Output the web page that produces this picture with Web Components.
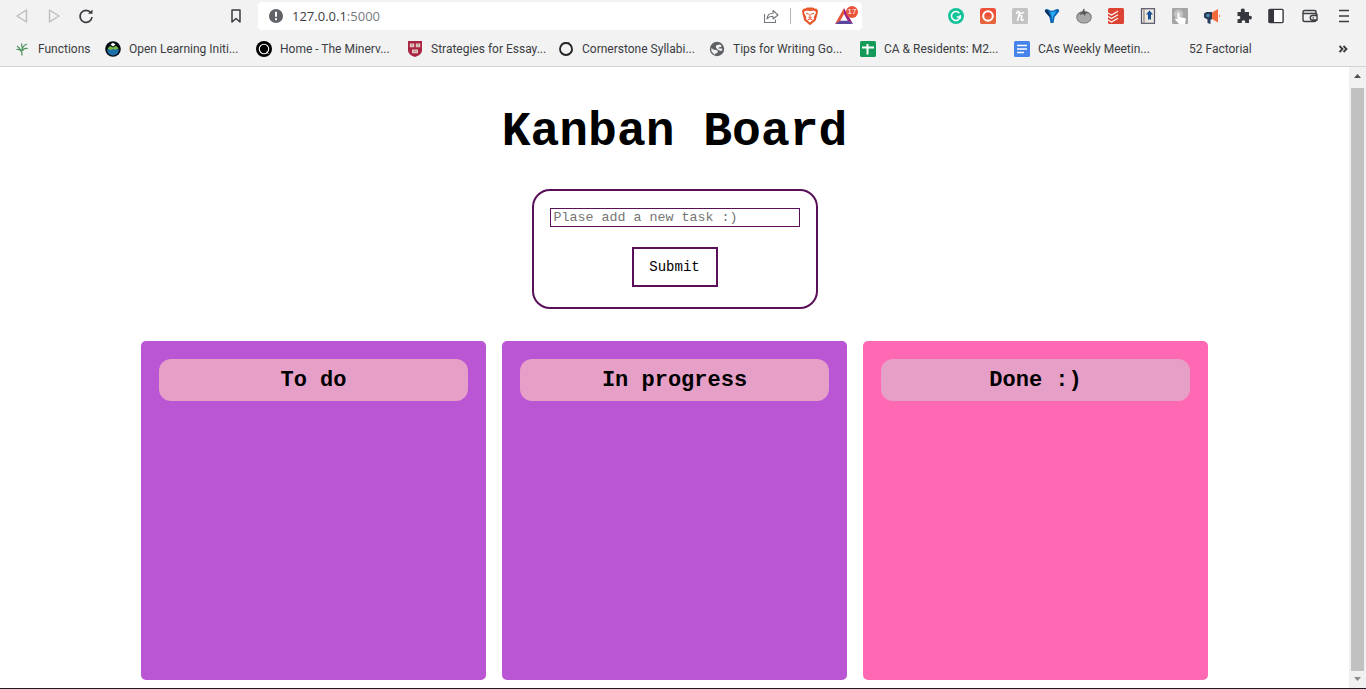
<!DOCTYPE html>
<html lang="en">
<head>
<meta charset="utf-8">
<title>Kanban Board</title>
<style>
html, body { margin: 0; }
body { font-family: "Open Sans", "Noto Sans", sans-serif; background: #fff; }
</style>
</head>
<body>
<app-window></app-window>

<template id="t-window">
<style>
:host { display: flex; flex-direction: column; min-height: 100vh; box-sizing: border-box; border-bottom: 1px solid #1d1824; }
.view { flex: 1; display: flex; }
kanban-page { flex: 1; min-width: 0; }
</style>
<browser-toolbar></browser-toolbar>
<bookmarks-bar></bookmarks-bar>
<div class="view">
  <kanban-page></kanban-page>
  <scroll-rail></scroll-rail>
</div>
</template>

<template id="t-toolbar">
<style>
:host { display: flex; align-items: center; height: 32px; padding: 0 6px; background: #f2f2f2; }
.nav { display: flex; width: 252px; box-sizing: border-box; padding-right: 6px; }
.mark { margin-left: auto; }
.bar { flex: 1; display: flex; align-items: center; height: 28px; background: #fff; border-radius: 4px; box-sizing: border-box; padding-left: 10px; min-width: 0; }
.url { flex: 1; min-width: 0; margin-left: 8px; font-size: 13px; line-height: 18px; color: #3c4043; text-decoration: none; }
.url span { color: #777b80; }
.sep { width: 1px; height: 16px; background: #b4b4b4; margin: 0 3px; }
.ext { display: flex; margin-left: 78px; }
</style>
<div class="nav">
  <tool-button name="back" label="Back"></tool-button>
  <tool-button name="forward" label="Forward"></tool-button>
  <tool-button name="reload" label="Reload"></tool-button>
  <tool-button class="mark" name="bookmark" label="Bookmark"></tool-button>
</div>
<div class="bar">
  <ui-icon name="info"></ui-icon>
  <a class="url" href="#">127.0.0.1<span>:5000</span></a>
  <tool-button name="share" label="Share"></tool-button>
  <div class="sep"></div>
  <tool-button name="brave" label="Shields"></tool-button>
  <notice-button></notice-button>
</div>
<div class="ext">
  <tool-button name="grammar" label="Writing"></tool-button>
  <tool-button name="ring" label="Recorder"></tool-button>
  <tool-button name="honey" label="Coupons"></tool-button>
  <tool-button name="vee" label="Video"></tool-button>
  <tool-button name="tomato" label="Timer"></tool-button>
  <tool-button name="todo" label="Tasks"></tool-button>
  <tool-button name="book" label="Reader"></tool-button>
  <tool-button name="touch" label="Touch"></tool-button>
  <tool-button name="horn" label="Read aloud"></tool-button>
  <tool-button name="puzzle" label="Extensions"></tool-button>
  <tool-button name="panel" label="Sidebar"></tool-button>
  <tool-button class="wide" name="wallet" label="Wallet"></tool-button>
  <tool-button class="wide" name="menu" label="Menu"></tool-button>
</div>
</template>

<template id="t-bookmarks">
<style>
:host { display: flex; align-items: center; height: 34px; padding: 0 7px 0 14px; background: #f2f2f2; border-bottom: 1px solid #d2d2d2; }
bookmark-link { width: 151px; }
.short { width: 91px; }
.long { width: 154px; }
tool-button { margin-left: auto; }
</style>
<bookmark-link class="short" name="leaf">Functions</bookmark-link>
<bookmark-link name="hill">Open Learning Initi...</bookmark-link>
<bookmark-link name="blackring">Home - The Minerv...</bookmark-link>
<bookmark-link name="crest">Strategies for Essay...</bookmark-link>
<bookmark-link name="circle">Cornerstone Syllabi...</bookmark-link>
<bookmark-link name="globe">Tips for Writing Go...</bookmark-link>
<bookmark-link class="long" name="sheet">CA &amp; Residents: M2...</bookmark-link>
<bookmark-link name="doc">CAs Weekly Meetin...</bookmark-link>
<bookmark-link class="short" name="none">52 Factorial</bookmark-link>
<tool-button name="more" label="More bookmarks"></tool-button>
</template>

<template id="t-kanban">
<style>
:host { display: flex; flex-direction: column; align-items: center; padding: 37px 16px 8px; box-sizing: border-box; font-family: "Courier New", "Liberation Mono", monospace; color: #000; }
h1 { margin: 0; font-size: 48px; line-height: 56px; }
task-form { margin: 29px 0 32px; }
.lists { display: flex; gap: 16px; width: 100%; max-width: 1067px; flex: 1; }
kanban-list { flex: 1; }
</style>
<h1>Kanban Board</h1>
<task-form></task-form>
<div class="lists">
  <kanban-list>To do</kanban-list>
  <kanban-list>In progress</kanban-list>
  <kanban-list style="--list: #ff69b4">Done :)</kanban-list>
</div>
</template>

<template id="t-form">
<style>
:host { display: block; }
form { display: flex; flex-direction: column; align-items: center; gap: 20px; padding: 17px 16px 20px; border: 2px solid #5a1059; border-radius: 18px; }
input, button { font-family: inherit; background: #fff; color: #000; box-sizing: border-box; margin: 0; border-radius: 0; }
input { width: 250px; height: 19px; padding: 0 3px; border: 1px solid #5a1059; outline: 0; }
input::placeholder { color: #757575; }
button { width: 86px; height: 40px; padding: 0; border: 2px solid #5a1059; font-size: 14px; }
</style>
<form>
  <input type="text" aria-label="New task" placeholder="Plase add a new task :)">
  <button type="button">Submit</button>
</form>
</template>

<template id="t-list">
<style>
:host { display: block; box-sizing: border-box; min-height: 339px; padding: 18px; border-radius: 5px; background: var(--list, #ba55d3); }
h2 { margin: 0; padding-top: 2px; font-size: 22px; line-height: 40px; text-align: center; border-radius: 12px; background: #e6a0c7; }
</style>
<h2><slot></slot></h2>
</template>

<template id="t-rail">
<style>
:host { display: flex; flex-direction: column; align-items: center; width: 17px; background: #f1f1f1; }
.thumb { flex: 1; width: 13px; background: #c1c1c1; }
svg { display: block; }
</style>
<svg width="17" height="21" aria-hidden="true"><path d="M5 11h7L8.500 7z" fill="#505050"/></svg>
<div class="thumb"></div>
<svg width="17" height="17" aria-hidden="true"><path d="M5 6h7L8.500 10z" fill="#8b8b8b"/></svg>
</template>

<script>
const icons = {
  back: '<path d="M12.500 2v12L3 8z" fill="none" stroke="#bdbdbd" stroke-width="1.400" stroke-linejoin="round"/>',
  forward: '<path d="M3.500 2v12L13 8z" fill="none" stroke="#bdbdbd" stroke-width="1.400" stroke-linejoin="round"/>',
  reload: '<path d="M12.800 4.800A6 6 0 1 0 14 9" fill="none" stroke="#3b3d42" stroke-width="1.700"/><path d="M10 5.800h4.500V1.400z" fill="#3b3d42"/>',
  bookmark: '<path d="M4 2h8v12l-4-3.500L4 14z" fill="none" stroke="#3b3d42" stroke-width="1.500" stroke-linejoin="round"/>',
  info: '<circle cx="8" cy="8" r="7" fill="#5f6368"/><path d="M7 3.800h2v5H7zM7 10.300h2v2H7z" fill="#fff"/>',
  share: '<path d="M1.500 6v8.500h11v-3M4 11c.3-4 2.500-5.700 6-5.700V2.500L15 7l-5 4V8.300C7.300 8.300 5.400 9 4 11z" fill="none" stroke="#74777b" stroke-width="1.100" stroke-linejoin="round"/>',
  brave: '<path d="M3.500.500L5-.500h6l1.500 1 2 .2 1.500 2-.5 3.300-1.800 6.500L8 17.200l-5.700-4.700L.500 6 0 2.700l1.500-2z" fill="#e8562a"/><path d="M2.500 3.200L5.500 2.600l2.500.6 2.500-.6 3 .6.500 1.500-1.500 3-.8 1.500.4 1.800L8 14.500 3.900 11l.4-1.800-.8-1.500-1.500-3z" fill="#fff"/><path d="M4 5.200l3 1M12 5.200L9 6.200M8 6v3.500M6.300 9.200L8 10.200l1.700-1M5.800 11.800L8 10.800l2.200 1" fill="none" stroke="#e8562a" stroke-width="1"/>',
  grammar: '<circle cx="8" cy="8" r="8" fill="#15c39a"/><path d="M11.300 5.200A4.400 4.400 0 1 0 12.200 9H8.800M12.300 7v3.800" fill="none" stroke="#fff" stroke-width="1.500"/>',
  ring: '<rect width="16" height="16" rx="2.500" fill="#ef5039"/><path d="M0 8h16v5.500a2.500 2.500 0 0 1-2.500 2.500h-11A2.500 2.500 0 0 1 0 13.500z" fill="#e8633c"/><circle cx="8" cy="8" r="4.800" fill="none" stroke="#fff" stroke-width="2"/>',
  honey: '<rect width="16" height="16" rx="1.500" fill="#c3c3c3"/><path d="M4.500 5.500c.5-2 2.800-3 2.800-1S6.500 9 5.500 12.500M6.500 9C8 6.800 10.200 7 9.700 9l-.5 2.300c-.1 1.200 1 1.300 2 .5M7.500 5c1.600.6 3 .3 4-.5" fill="none" stroke="#fff" stroke-width="1.500" stroke-linecap="round"/>',
  vee: '<path d="M.800 2c.8-1.300 2.800-1.200 4.200-.2C6.500 3 9.500 3 11 1.800c1.400-1 3.400-1.100 4.200.2.3 2.500-3.700 5-4.700 7.500L9.500 15h-3l-1-5.500C4.500 7 .500 4.500.800 2z" fill="#0b66b5"/><path d="M6 3.500c2 .8 4 .5 6-.8C12 5 9.500 7 9 9.500L8.500 13 7.500 8z" fill="#2aaaf0"/><path d="M1 2.500c1-.8 2.500-.3 3.200.5L7 10C5 7.500 1.300 5 1 2.500z" fill="#102c54"/>',
  tomato: '<ellipse cx="8" cy="9.300" rx="7.700" ry="6.300" fill="#707070"/><ellipse cx="8" cy="9.400" rx="6.800" ry="5.400" fill="#a8a8a8"/><path d="M2.500 5.500L6.500 4 7 1.500 8.500.500v3L13 5l-3.500.4L9 8 7 5.800l-3 1.500.8-1.800z" fill="#555"/>',
  todo: '<rect width="16" height="16" rx="1.500" fill="#dc4333"/><path d="M0 5l3.500 2L10 3.300M0 8.500l3.500 2L10 6.800M0 12l3.500 2L10 10.300" fill="none" stroke="#fff" stroke-width="1.100"/>',
  book: '<rect x="1.500" y=".7" width="13" height="14.600" fill="#ece7df" stroke="#55586c" stroke-width="1.200"/><path d="M4 1v14" stroke="#9a8b85" stroke-width="1.300"/><path d="M9.500 2.500L13 6.500h-2V12l-1.500-1L8 12V6.500H6z" fill="#174f93"/>',
  touch: '<rect width="16" height="16" rx="1" fill="#a5a5a5"/><circle cx="6.500" cy="6" r="4.500" fill="#c4c4c4"/><path d="M5.500 5.500c0-1.500 2-1.500 2 0V9l5 1c1.500.4 1.500 1 1.200 2.500L13 16H7l-4-4.500c0-1.300 1.500-1.300 2.500 0z" fill="#fff"/>',
  horn: '<path d="M8 4.500l6-3.500v13.500L8 11z" fill="#f56a3b"/><path d="M15 6.500c1.200.5 1.200 2.500 0 3z" fill="#f56a3b"/><path d="M8 4v7.500H6.500V16l-3-1v-3.500L0 9.500V5.500L2.500 4z" fill="#263d59"/><circle cx="4" cy="7.500" r="1.800" fill="#5587a6"/>',
  puzzle: '<path d="M1.500 4H5C4.300 1.500 5.200.6 6.800.6S9.300 1.500 8.600 4H13v4c2-.5 2.800.3 2.800 1.700S15 11.800 13 11.300V15H9.200c.3-2-.5-2.700-1.700-2.700S5.500 13 5.800 15H1.500v-3.800c2 .2 2.800-.5 2.800-1.600S3.500 7.900 1.500 8.200z" fill="#36383e"/>',
  panel: '<rect x=".9" y="1.400" width="14.200" height="13.200" rx="1" fill="#fff" stroke="#36383e" stroke-width="1.400"/><path d="M1 2h5v12H1z" fill="#36383e"/>',
  wallet: '<path d="M14 5V3.800C14 3 13.500 2.500 12.700 2.500H2.800C1.500 2.500 1 3.300 1 4.500v7.200c0 1.200.6 1.800 1.800 1.800H12c1.300 0 2-.5 2-1.500M1.200 5.500H13c1.400 0 2 .5 2 1.500v5h-4.500a2.200 2.200 0 0 1 0-4.500H15" fill="none" stroke="#3b3d42" stroke-width="1.400"/><path d="M10.500 9.800h1.500" stroke="#3b3d42" stroke-width="1.200"/>',
  menu: '<path d="M3 2.500h10M3 8h10M3 13.500h10" stroke="#3b3d42" stroke-width="1.300"/>',
  more: '<path d="M4.500 5l3 3-3 3M8.500 5l3 3-3 3" fill="none" stroke="#36383e" stroke-width="1.800"/>',
  leaf: '<path d="M8 14.500C8.300 11 7.500 8.500 3 5M8.200 10C8 7 9 4.500 13 3M8.200 10c1-2 3-3 5.500-2.500M2.500 8.500c2-.3 4 .3 5.500 2.500M7.500 2.500l.7 5" fill="none" stroke="#4d925c" stroke-width="1.200"/>',
  hill: '<circle cx="8" cy="8" r="7.800" fill="#050b12"/><path d="M2 8.500c4-1.200 8-1.200 12 0A6 6 0 0 1 2 8.500z" fill="#1c6ea8"/><path d="M2.500 7.500L5 5l3 1.500L11 4.800l2.700 2.700-3 1.200-2.500-.8-3 1z" fill="#75b843"/><path d="M5.500 3.500L8 1.800l2.500 1.700L8 5.500z" fill="#fff"/>',
  blackring: '<circle cx="8" cy="8" r="8" fill="#000"/><circle cx="8" cy="8" r="4.700" fill="none" stroke="#fff" stroke-width="1.100"/><path d="M10.500 11l2 1.500" stroke="#fff"/>',
  crest: '<path d="M1 0h14v9c0 4-4 6-7 7-3-1-7-3-7-7z" fill="#a92443"/><path d="M2.800 2.500h4.400v3.700H2.800zM8.800 2.500h4.400v3.700H8.800zM5 8.500h6v3.700H5z" fill="#e4c9c4"/><path d="M5 2.500v3M11 2.500v3M6 10.200h4" stroke="#a98576" stroke-width=".8"/>',
  circle: '<circle cx="8" cy="8" r="6" fill="none" stroke="#222" stroke-width="1.800"/><path d="M3 3.500C5 1.300 9 .8 12 2.300M14.500 9c-.5 2.500-2.500 4.600-5 5.200" fill="none" stroke="#333" stroke-width=".9"/>',
  globe: '<circle cx="8" cy="8" r="7.200" fill="#5d6065"/><path d="M2.200 7l2.600 1.800 2.700.2 1.500 1.200-.8 1.800-2.200.7V14L2.500 10.500zM7 4.500l3.500-1 2 1-.5 1.500-2 .3-.5 1.200h3.500l.5 1.700-2 .8-3-1.500L7 6.500z" fill="#f2f2f2"/>',
  sheet: '<rect width="16" height="16" rx="1.500" fill="#159a58"/><path d="M2 6.500h12M7.500 3v10.500" stroke="#fff" stroke-width="2"/>',
  doc: '<rect width="16" height="16" rx="1.500" fill="#4683ea"/><path d="M3 4.500h10M3 8h10M3 11.500h7" stroke="#fff" stroke-width="1.700"/>',
  rewards: '<path d="M8 0L-1 16h18z" fill="#fff"/><path d="M8 0L-1 16l5-2.800L8 6z" fill="#e7543a"/><path d="M8 0l9 16-5-2.800L8 6z" fill="#9a2583"/><path d="M-1 16h18l-5-3.300H4z" fill="#59479e"/>',
  none: ''
};
const svg = name => `<svg width="16" height="16" viewBox="0 0 16 16" aria-hidden="true">${icons[name] || ''}</svg>`;

class Base extends HTMLElement {
  constructor() { super(); this.attachShadow({ mode: 'open' }); }
}
const fromTemplate = (tag, id) => customElements.define(tag, class extends Base {
  constructor() {
    super();
    this.shadowRoot.append(document.getElementById(id).content.cloneNode(true));
  }
});

customElements.define('ui-icon', class extends Base {
  connectedCallback() {
    this.shadowRoot.innerHTML = `<style>:host{display:block;width:16px;height:16px;flex:none}svg{display:block;overflow:visible}</style>${svg(this.getAttribute('name'))}`;
  }
});
customElements.define('tool-button', class extends Base {
  connectedCallback() {
    this.shadowRoot.innerHTML = `<style>:host{display:block;flex:none}:host(.wide){margin-left:2px}
      button{display:flex;align-items:center;justify-content:center;width:32px;height:28px;padding:0;border:0;background:none}</style>
      <button type="button" aria-label="${this.getAttribute('label')}"><ui-icon name="${this.getAttribute('name')}"></ui-icon></button>`;
  }
});
customElements.define('notice-button', class extends Base {
  connectedCallback() {
    this.shadowRoot.innerHTML = `<style>:host{display:block;position:relative;flex:none}
      button{display:flex;align-items:center;justify-content:center;width:36px;height:28px;padding:0;border:0;background:none}
      span{position:absolute;right:4px;top:4px;width:12px;height:12px;border-radius:6px;background:#e8553b;color:#fff;font-size:8px;line-height:12px;text-align:center}</style>
      <button type="button" aria-label="Rewards"><ui-icon name="rewards"></ui-icon><span>17</span></button>`;
  }
});
customElements.define('bookmark-link', class extends Base {
  connectedCallback() {
    this.shadowRoot.innerHTML = `<style>:host{display:block;flex:none}
      a{display:flex;align-items:center;gap:8px;font:12px/16px Roboto,sans-serif;white-space:nowrap;color:#3b3d42;text-decoration:none}</style>
      <a href="#"><ui-icon name="${this.getAttribute('name')}"></ui-icon><slot></slot></a>`;
  }
});
fromTemplate('scroll-rail', 't-rail');
fromTemplate('kanban-list', 't-list');
fromTemplate('task-form', 't-form');
fromTemplate('kanban-page', 't-kanban');
fromTemplate('bookmarks-bar', 't-bookmarks');
fromTemplate('browser-toolbar', 't-toolbar');
fromTemplate('app-window', 't-window');
</script>
</body>
</html>
